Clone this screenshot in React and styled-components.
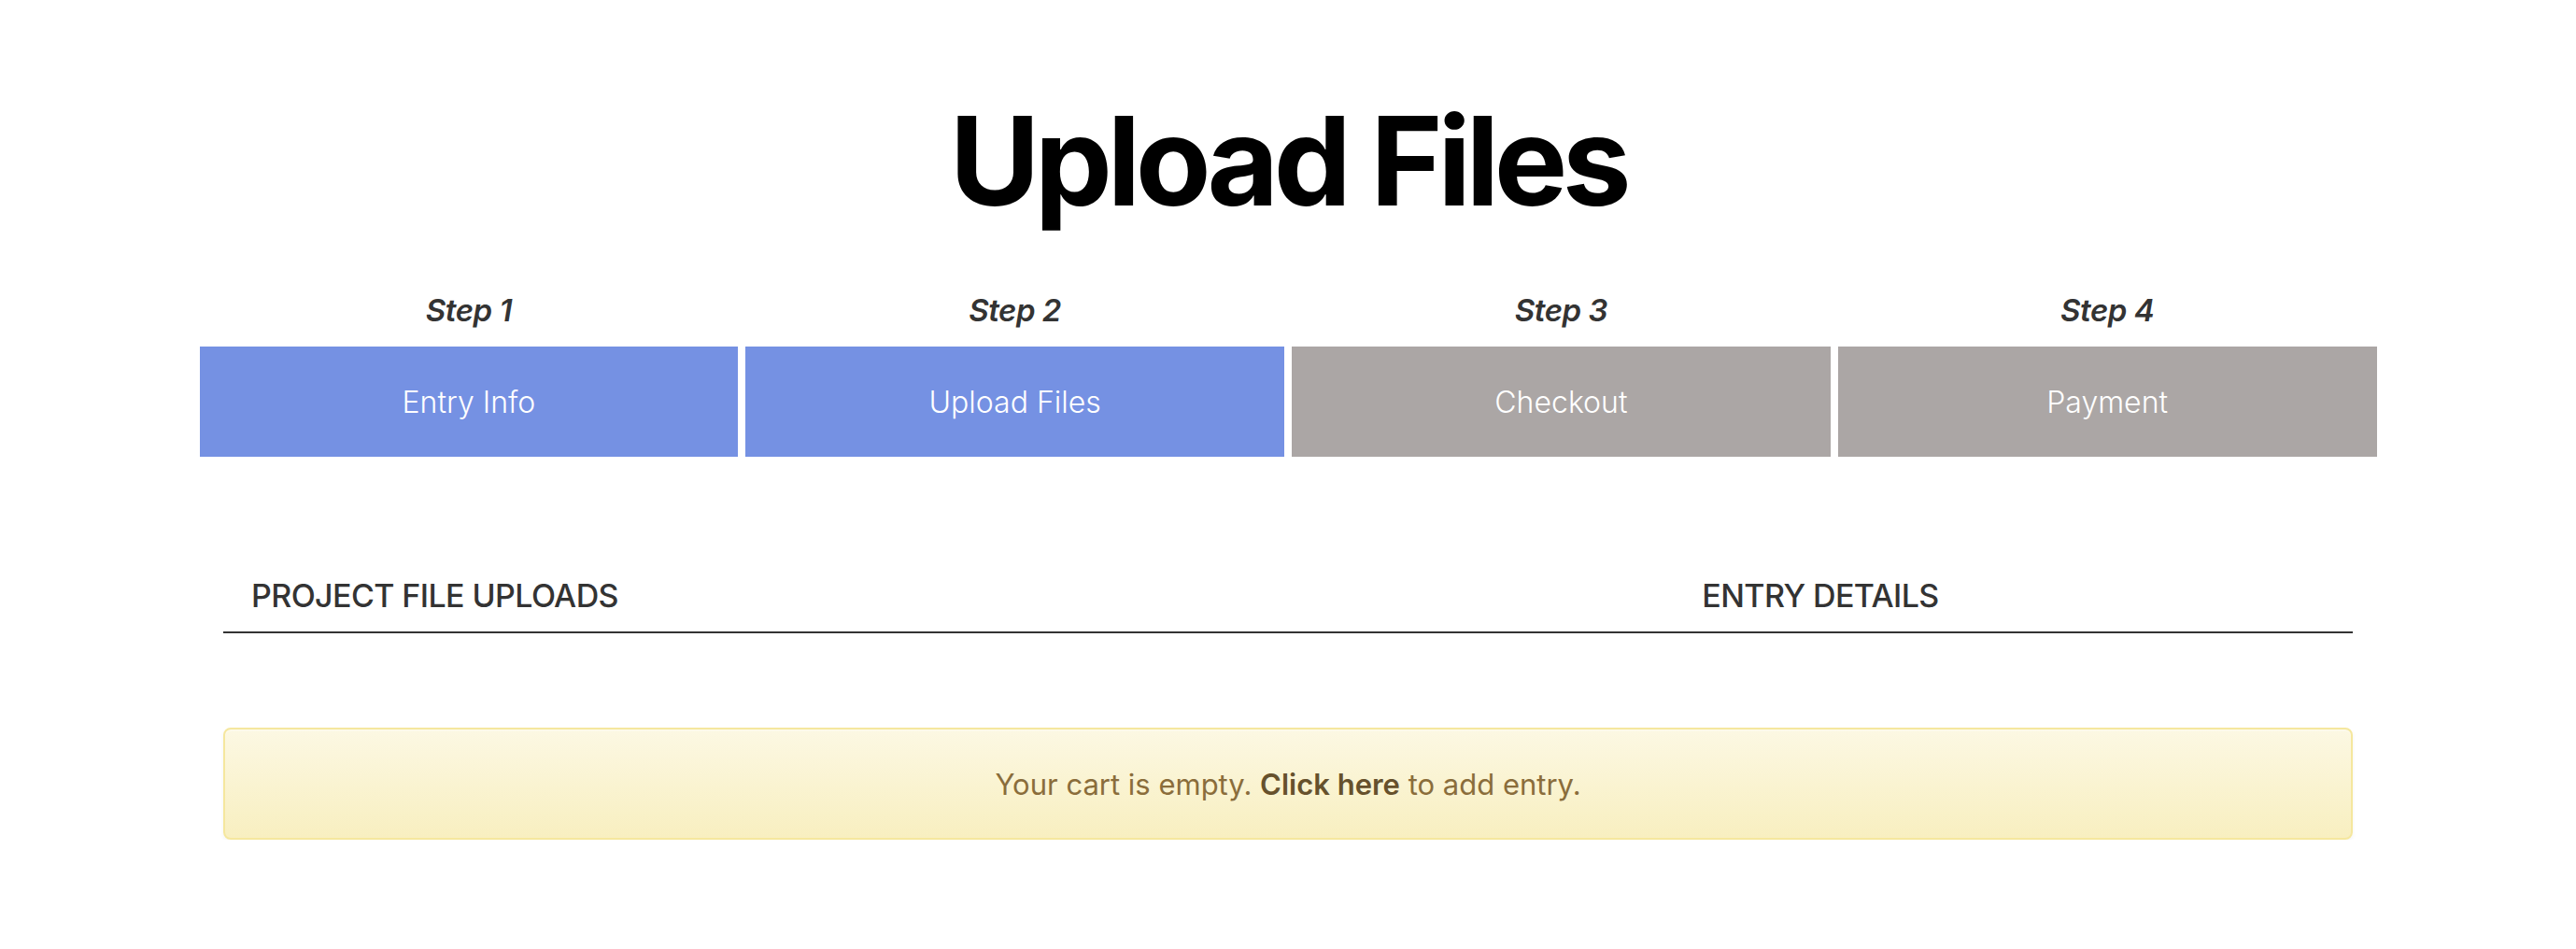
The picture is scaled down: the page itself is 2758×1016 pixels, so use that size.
import React from 'react'
import styled, { createGlobalStyle } from 'styled-components'

const GlobalStyle = createGlobalStyle`
  body {
    margin: 0;
    background: #ffffff;
    font-family: Inter, "Liberation Sans", sans-serif;
    color: #333333;
  }
`;

const Page = styled.div`
  padding-top: 92px;
`;

const Title = styled.h1`
  margin: 0;
  text-align: center;
  font-size: 132px;
  line-height: 160px;
  font-weight: 700;
  letter-spacing: -5.5px;
  color: #000000;
`;

const Steps = styled.div`
  width: 2331px;
  margin: 60px auto 0;
  display: grid;
  grid-template-columns: repeat(4, 1fr);
  column-gap: 8px;
`;

const Step = styled.div`
  display: flex;
  flex-direction: column;
`;

const StepLabel = styled.div`
  text-align: center;
  font-size: 33px;
  line-height: 40px;
  font-style: italic;
  font-weight: 600;
  letter-spacing: -0.5px;
  color: #333333;
  margin-bottom: 19px;
`;

const StepBlock = styled.div`
  height: 118px;
  display: flex;
  align-items: center;
  justify-content: center;
  background: ${p => (p.done ? '#7591e3' : '#aba6a5')};
  color: #ffffff;
  font-size: 32px;
  font-weight: 300;
`;

const Content = styled.div`
  width: 2280px;
  margin: 0 auto;
`;

const HeaderRow = styled.div`
  margin-top: 128px;
  display: grid;
  grid-template-columns: 1fr 1fr;
  border-bottom: 2px solid #333333;
  padding-bottom: 18px;
`;

const ColHead = styled.div`
  font-size: 34px;
  line-height: 41px;
  font-weight: 500;
  letter-spacing: -0.6px;
  color: #333333;
  text-align: ${p => (p.center ? 'center' : 'left')};
  padding-left: ${p => (p.center ? '0' : '30px')};
`;

const Alert = styled.div`
  margin-top: 101px;
  height: 116px;
  display: flex;
  align-items: center;
  justify-content: center;
  border: 2px solid #f5e79e;
  border-radius: 8px;
  background-image: linear-gradient(to bottom, #fcf8e3 0, #f8efc0 100%);
  box-shadow: inset 0 2px 0 rgba(255, 255, 255, 0.25), 0 2px 4px rgba(0, 0, 0, 0.05);
  color: #8a6d3b;
  font-size: 31px;
  font-weight: 400;
`;

const AlertLink = styled.a`
  color: #66512c;
  font-weight: 600;
  text-decoration: none;
  cursor: pointer;
`;

export default function App() {
    let steps = [
        { label: "Step 1", name: "Entry Info", done: true },
        { label: "Step 2", name: "Upload Files", done: true },
        { label: "Step 3", name: "Checkout", done: false },
        { label: "Step 4", name: "Payment", done: false }
    ];

    return (
        <Page>
            <GlobalStyle />
            <Title>Upload Files</Title>
            <Steps>
                {steps.map((step, Index) =>
                    <Step key={Index}>
                        <StepLabel>{step.label}</StepLabel>
                        <StepBlock done={step.done}>{step.name}</StepBlock>
                    </Step>
                )}
            </Steps>
            <Content>
                <HeaderRow>
                    <ColHead>PROJECT FILE UPLOADS</ColHead>
                    <ColHead center>ENTRY DETAILS</ColHead>
                </HeaderRow>
                <Alert>
                    <span>
                        Your cart is empty. <AlertLink>Click here</AlertLink> to add entry.
                    </span>
                </Alert>
            </Content>
        </Page>
    )
}
